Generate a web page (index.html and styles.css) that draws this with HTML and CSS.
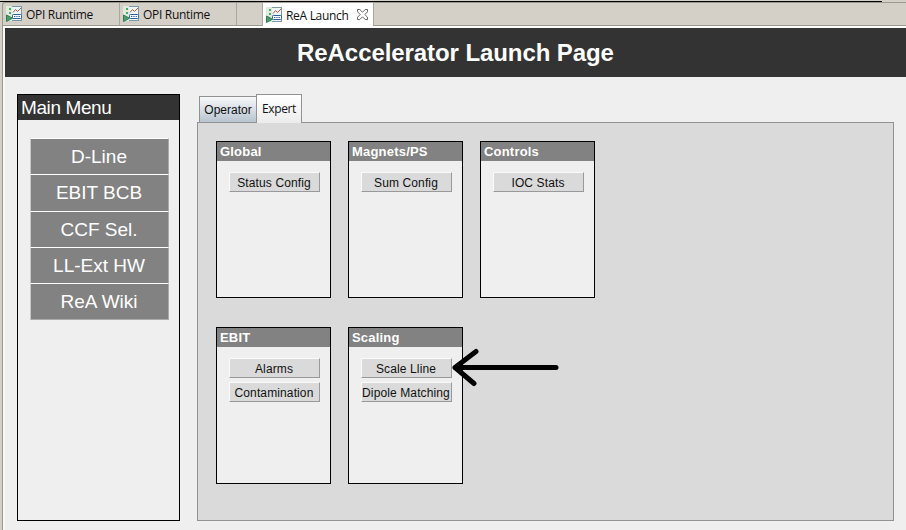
FILE: index.html
```html
<!DOCTYPE html>
<html lang="en">
<head>
<meta charset="utf-8">
<title>ReA Launch</title>
<link rel="stylesheet" href="styles.css">
</head>
<body>
<svg class="defs" aria-hidden="true">
  <symbol id="opi" viewBox="0 0 16 16">
    <rect x="1.5" y=".5" width="14" height="14" fill="#eef5f7" stroke="#7d9aa4"/>
    <path d="M0 0h6v15H0z" fill="#e1eadf"/>
    <path d="M3 2h2v2H3zM3 6h2v2H3z" fill="#42b058"/>
    <path d="M7 6.500l2.500-3 2 2 3.500-3.500" fill="none" stroke="#b9573f"/>
    <rect x="6.500" y="8.500" width="9" height="4" rx=".8" fill="#fff" stroke="#2d64a0"/>
    <path d="M8 10h1.300v1H8zM10.300 10h1.300v1h-1.300zM12.600 10h1.300v1h-1.300z" fill="#2d64a0"/>
    <path d="M.5 9v6.500L6.500 12.200z" fill="#4b9a70" stroke="#2f8052"/>
  </symbol>
</svg>
<div class="topline"></div>
<div class="tabbar">
  <div class="etab"><svg class="ico"><use href="#opi"/></svg><span>OPI Runtime</span></div>
  <div class="etab"><svg class="ico"><use href="#opi"/></svg><span>OPI Runtime</span></div>
  <div class="etab active"><svg class="ico"><use href="#opi"/></svg><span>ReA Launch</span>
    <svg class="close" viewBox="0 0 11 11"><path d="M.5 .5h2.300l2.700 2.700L8.200.5h2.300v2.300L7.800 5.500l2.700 2.700v2.300H8.200L5.500 7.800l-2.700 2.700H.5V8.200l2.700-2.700L.5 2.800z" fill="#fff" stroke="#666"/></svg>
  </div>
</div>
<div class="view">
  <h1>ReAccelerator Launch Page</h1>
  <div class="content">
    <nav class="menu">
      <h2>Main Menu</h2>
      <div class="links">
        <a>D-Line</a><a>EBIT BCB</a><a>CCF Sel.</a><a>LL-Ext HW</a><a>ReA Wiki</a>
      </div>
    </nav>
    <main class="pages">
      <div class="tabs"><div class="tab">Operator</div><div class="tab selected">Expert</div></div>
      <div class="panel">
        <section class="card"><h3>Global</h3><div class="btns"><button>Status Config</button></div></section>
        <section class="card"><h3>Magnets/PS</h3><div class="btns"><button>Sum Config</button></div></section>
        <section class="card"><h3>Controls</h3><div class="btns"><button>IOC Stats</button></div></section>
        <section class="card"><h3>EBIT</h3><div class="btns"><button>Alarms</button><button>Contamination</button></div></section>
        <section class="card"><h3>Scaling</h3><div class="btns"><button>Scale Lline</button><button>Dipole Matching</button></div></section>
      </div>
    </main>
  </div>
</div>
<svg class="arrow" viewBox="0 0 110 40"><path d="M5 19.500H106M26 3.500L5 19.500L24 35.500" fill="none" stroke="#000" stroke-width="5" stroke-linecap="round" stroke-linejoin="round"/></svg>
</body>
</html>
```
FILE: styles.css
```css
* { box-sizing: border-box; }
body {
  margin: 0;
  width: 906px;
  height: 530px;
  overflow: hidden;
  background: #d4d0c8;
  font-family: "Liberation Sans", Arial, sans-serif;
  color: #111;
}
h1, h2, h3 { margin: 0; }
.defs { display: none; }
.topline { height: 2px; width: 882px; border-bottom: 1px solid #000; }
.tabbar {
  display: flex;
  height: 24px;
  margin-left: 2px;
  border: 1px solid #999990;
  border-right: 0;
  border-top-left-radius: 3px;
  font: 12px "Open Sans", "Noto Sans", sans-serif;
}
.etab {
  display: flex;
  align-items: center;
  width: 117px;
  padding: 1px 0 0 3px;
  border-right: 1px solid #aaa79f;
  letter-spacing: -.3px;
  white-space: nowrap;
}
.etab span { margin-left: 4px; }
.ico { width: 16px; height: 16px; flex: none; margin-top: -1px; }
.etab.active {
  width: 112px;
  height: 24px;
  margin: -1px 0 -1px 25px;
  padding-top: 1px;
  background: #fff;
  border: 1px solid #aaa79f;
  border-width: 1px 1px 0;
}
.close { width: 11px; height: 11px; margin: -2px 0 0 8px; flex: none; }
.view {
  height: 504px;
  margin-left: 2px;
  padding-top: 2px;
  border-left: 1px solid #999990;
  background: linear-gradient(#fff, #fff) 0 0 / 100% 2px no-repeat, linear-gradient(#f8f8f5, #f8f8f5) 0 0 / 2px 100% no-repeat, #efefef;
}
h1 {
  height: 49px;
  margin-left: 2px;
  background: #333;
  color: #fff;
  font-size: 24px;
  letter-spacing: -.08px;
  line-height: 50px;
  text-align: center;
}
.content { display: flex; padding: 17px 12px 0 14px; }
.menu { width: 163px; height: 427px; border: 1px solid #000; }
.menu h2 {
  height: 25px;
  padding-left: 3px;
  background: #333;
  color: #fff;
  font-size: 19px;
  font-weight: 400;
  letter-spacing: -.4px;
  line-height: 25px;
}
.links {
  display: grid;
  grid-template-rows: 36px 37px 36px 36px 37px;
  width: 139px;
  margin: 18px 0 0 12px;
}
.links a {
  background: #828282;
  border-top: 1px solid #fff;
  border-left: 1px solid #c8c8c8;
  border-right: 1px solid #aaa;
  padding-right: 1px;
  color: #fff;
  font-size: 19px;
  line-height: 36px;
  text-align: center;
}
.links a:last-child { border-bottom: 1px solid #aaa; }
.pages { margin-left: 17px; width: 697px; }
.tabs { display: flex; align-items: flex-end; height: 28px; padding-left: 2px; font-size: 12px; }
.tab {
  width: 58px;
  height: 26px;
  border: 1px solid #929292;
  border-bottom: 0;
  background: linear-gradient(#f7f8f9, #b8c4d0);
  line-height: 26px;
  text-align: center;
  white-space: nowrap;
}
.tab.selected {
  width: 46px;
  height: 29px;
  margin: 0 0 -1px -1px;
  background: linear-gradient(#fff, #ececec);
  font: 12px/28px "Open Sans", "Noto Sans", sans-serif;
  letter-spacing: -.4px;
  z-index: 1;
}
.panel {
  display: grid;
  grid-template-columns: repeat(3, 115px);
  grid-template-rows: repeat(2, 157px);
  gap: 29px 17px;
  height: 399px;
  padding: 18px;
  border: 1px solid #929292;
  background: #dadada;
}
.card { border: 1px solid #000; background: #efefef; }
.card h3 {
  height: 19px;
  padding-left: 3px;
  background: #828282;
  color: #fff;
  font-size: 13px;
  letter-spacing: .2px;
  line-height: 19px;
}
.btns { display: grid; gap: 4px; padding: 11px 0 0 12px; }
button {
  width: 91px;
  height: 20px;
  padding: 1px 1px 0 0;
  border: 1px solid;
  border-color: #fafafa #999 #999 #fafafa;
  background: #dadada;
  color: #111;
  font: 12px "Liberation Sans", Arial, sans-serif;
  letter-spacing: .12px;
  white-space: nowrap;
}
.arrow { position: absolute; left: 450px; top: 348px; width: 110px; height: 40px; }
```
